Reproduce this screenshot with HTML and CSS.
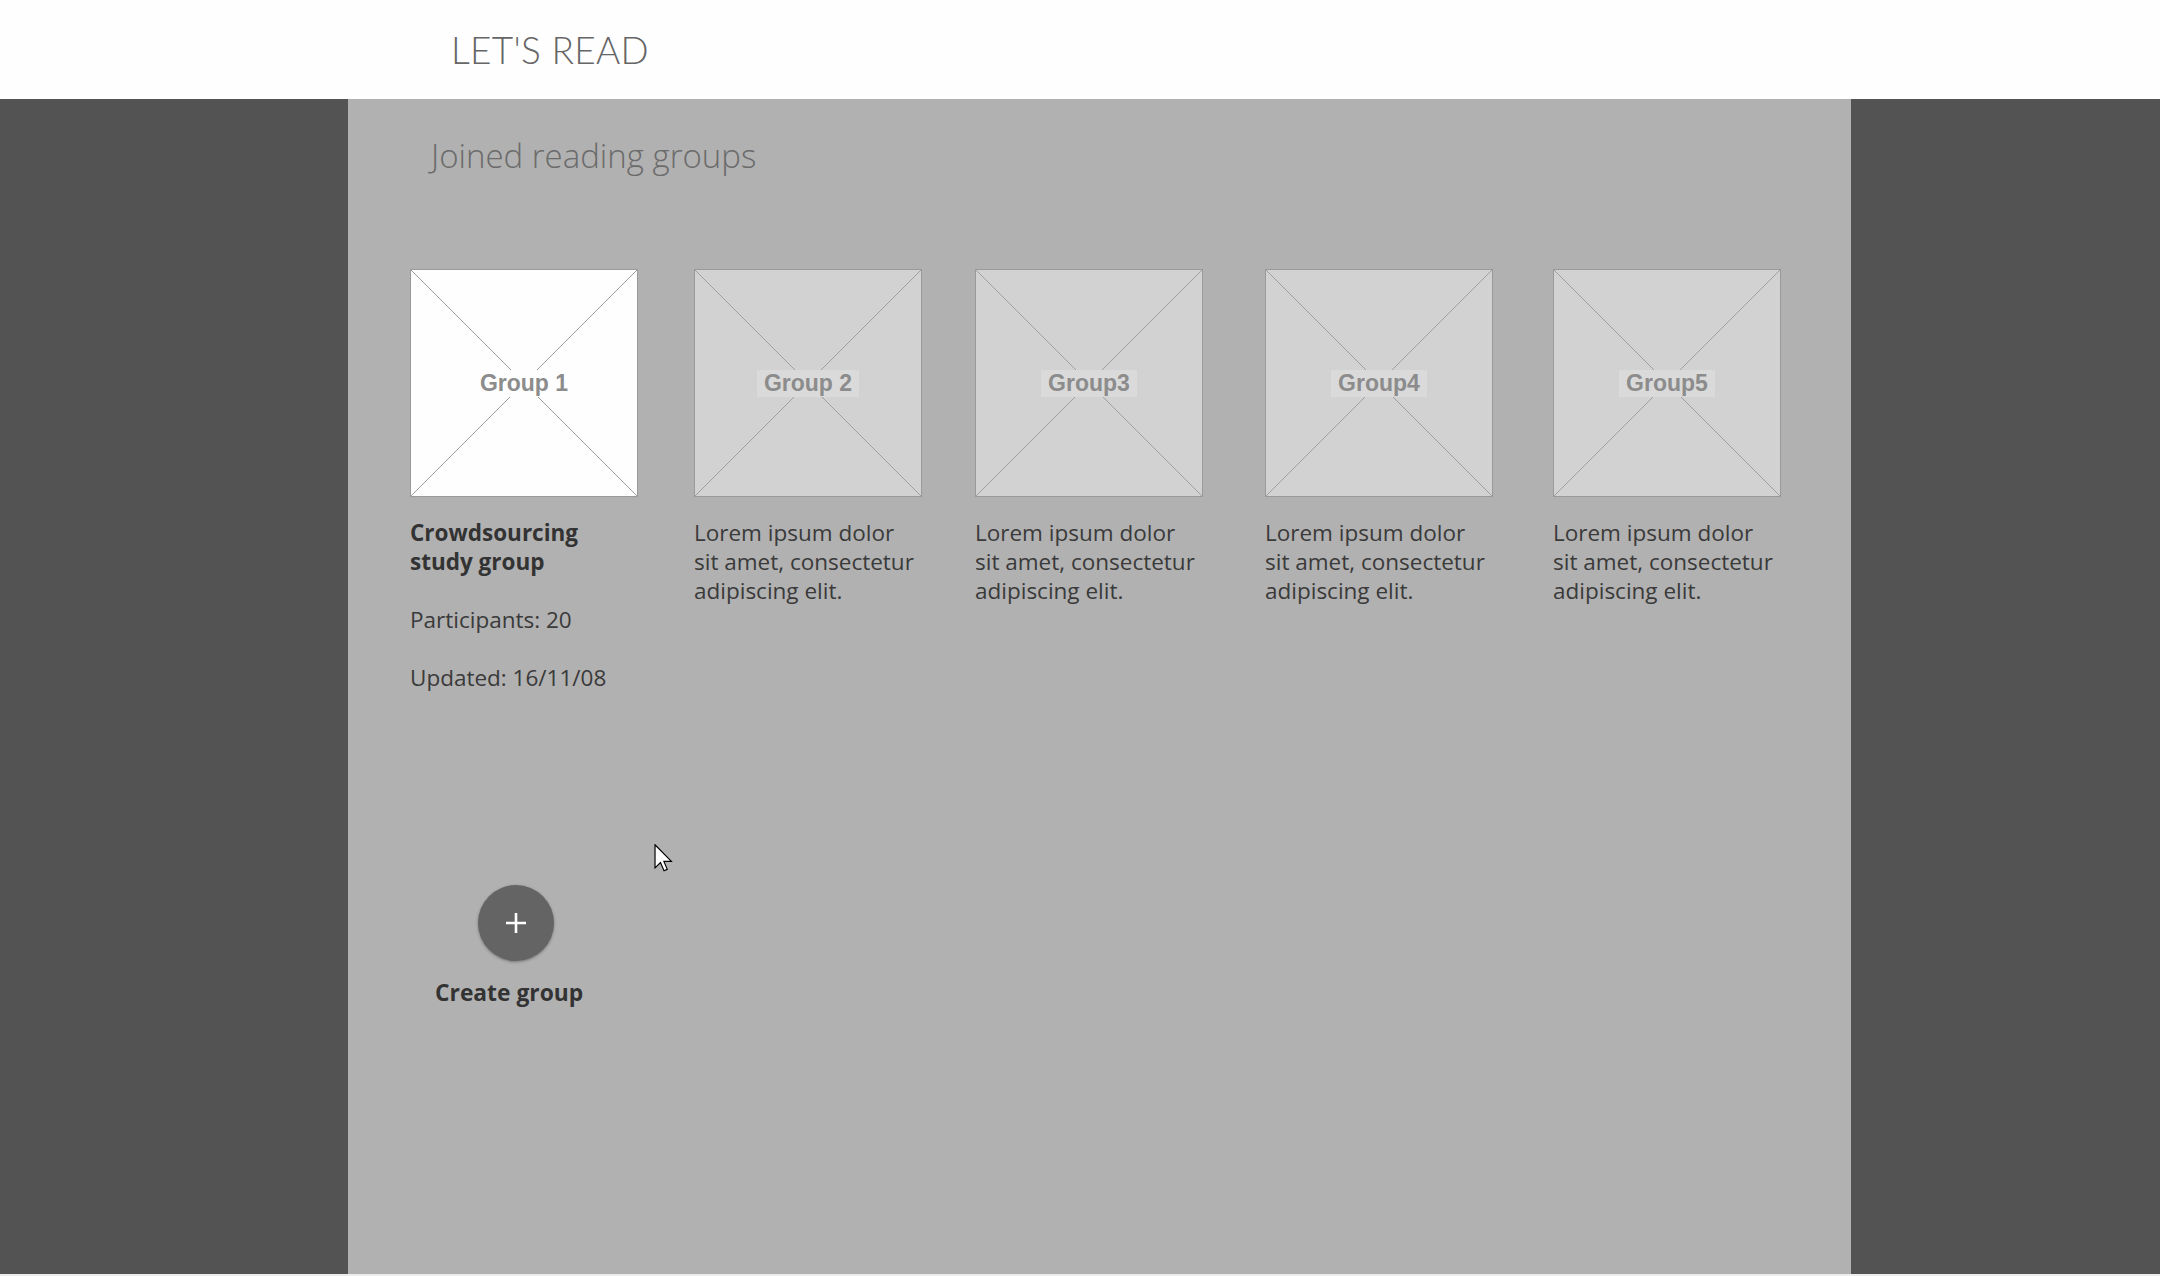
FILE: index.html
```html
<!DOCTYPE html>
<html lang="en">
<head>
<meta charset="utf-8">
<title>Let's Read</title>
<link rel="stylesheet" href="styles.css">
</head>
<body>
<header class="topbar">
  <div class="brand">LET'S READ</div>
</header>
<div class="layout">
  <aside class="side side-left"></aside>
  <main class="main">
    <h1 class="page-title">Joined reading groups</h1>
    <div class="groups">
      <div class="group">
        <div class="thumb thumb-active"><span class="thumb-label">Group 1</span></div>
        <div class="group-text">
          <p class="group-name">Crowdsourcing<br>study group</p>
          <p class="group-meta">Participants: 20</p>
          <p class="group-meta">Updated: 16/11/08</p>
        </div>
      </div>
      <div class="group">
        <div class="thumb"><span class="thumb-label">Group 2</span></div>
        <div class="group-text"><p>Lorem ipsum dolor<br>sit amet, consectetur<br>adipiscing elit.</p></div>
      </div>
      <div class="group">
        <div class="thumb"><span class="thumb-label">Group3</span></div>
        <div class="group-text"><p>Lorem ipsum dolor<br>sit amet, consectetur<br>adipiscing elit.</p></div>
      </div>
      <div class="group">
        <div class="thumb"><span class="thumb-label">Group4</span></div>
        <div class="group-text"><p>Lorem ipsum dolor<br>sit amet, consectetur<br>adipiscing elit.</p></div>
      </div>
      <div class="group">
        <div class="thumb"><span class="thumb-label">Group5</span></div>
        <div class="group-text"><p>Lorem ipsum dolor<br>sit amet, consectetur<br>adipiscing elit.</p></div>
      </div>
    </div>
    <div class="create">
      <button class="fab" type="button" aria-label="Create group">
        <svg width="20" height="20" viewBox="0 0 20 20"><path d="M10 0V20M0 10H20" stroke="#ffffff" stroke-width="2.6" fill="none"/></svg>
      </button>
      <div class="create-label">Create group</div>
    </div>
    <svg class="cursor" width="19" height="28" viewBox="0 0 12.5 19"><path d="M0.5 0.5V16.2L4.2 12.6L6.6 18.2L8.8 17.2L6.5 11.8H11.6Z" fill="#ffffff" stroke="#000000" stroke-width="0.8" stroke-linejoin="miter"/></svg>
  </main>
  <aside class="side side-right"></aside>
</div>
</body>
</html>
```
FILE: styles.css
```css
html, body {
  margin: 0;
  padding: 0;
}
body {
  background: #ededed;
  font-family: "Open Sans", Lato, sans-serif;
  color: #383838;
}
.topbar {
  height: 99px;
  background: #fefefe;
  display: flex;
  align-items: center;
  padding-left: 451px;
}
.brand {
  font-family: Lato, sans-serif;
  font-weight: 300;
  font-size: 37px;
  letter-spacing: 0.3px;
  color: #666666;
  line-height: 40px;
  padding-top: 1px;
}
.layout {
  display: flex;
  height: 1175px;
}
.side {
  background: #535353;
}
.side-left {
  flex: 0 0 348px;
}
.side-right {
  flex: 1 1 auto;
}
.main {
  flex: 0 0 1503px;
  background: #b1b1b1;
  position: relative;
  padding: 37px 0 0 62px;
  box-sizing: border-box;
}
.page-title {
  margin: 0 0 93px 21px;
  font-weight: 300;
  font-size: 33px;
  line-height: 40px;
  color: #6b6b6b;
}
.groups {
  display: flex;
  gap: 53px;
}
.group {
  width: 228px;
}
.group:nth-child(2) {
  margin-left: 3px;
}
.group:nth-child(4) {
  margin-left: 9px;
}
.group:nth-child(5) {
  margin-left: 7px;
}
.thumb {
  position: relative;
  box-sizing: border-box;
  width: 228px;
  height: 228px;
  border: 1px solid #9a9a9a;
  background-color: #d2d2d2;
  background-image:
    linear-gradient(to top right, transparent calc(50% - 0.7px), #9e9e9e calc(50% - 0.2px), #9e9e9e calc(50% + 0.2px), transparent calc(50% + 0.7px)),
    linear-gradient(to bottom right, transparent calc(50% - 0.7px), #9e9e9e calc(50% - 0.2px), #9e9e9e calc(50% + 0.2px), transparent calc(50% + 0.7px));
  display: flex;
  align-items: center;
  justify-content: center;
}
.thumb-active {
  background-color: #fefefe;
}
.thumb-label {
  font-family: "Liberation Sans", Arial, sans-serif;
  font-weight: 700;
  font-size: 23px;
  line-height: 27px;
  padding: 0 7px;
  color: #8c8c8c;
  background: #dadada;
}
.thumb-active .thumb-label {
  background: #fefefe;
}
.group-text {
  padding-top: 21px;
}
.group-text p {
  margin: 0;
  font-size: 22.5px;
  line-height: 29px;
  color: #3a3a3a;
}
.group-text .group-name {
  font-weight: 700;
  color: #333333;
}
.group-text .group-meta {
  margin-top: 29px;
}
.create {
  display: inline-flex;
  flex-direction: column;
  align-items: center;
  margin-top: 193px;
  margin-left: 25px;
}
.fab {
  width: 76px;
  height: 76px;
  border-radius: 50%;
  border: none;
  padding: 0;
  margin-left: 13px;
  background: #646464;
  box-shadow: 0 1px 3px rgba(0, 0, 0, 0.35);
  display: flex;
  align-items: center;
  justify-content: center;
}
.fab svg {
  display: block;
}
.create-label {
  margin-top: 18px;
  font-weight: 700;
  font-size: 22.8px;
  line-height: 28px;
  color: #333333;
}
.cursor {
  position: absolute;
  left: 306px;
  top: 745px;
}
```
